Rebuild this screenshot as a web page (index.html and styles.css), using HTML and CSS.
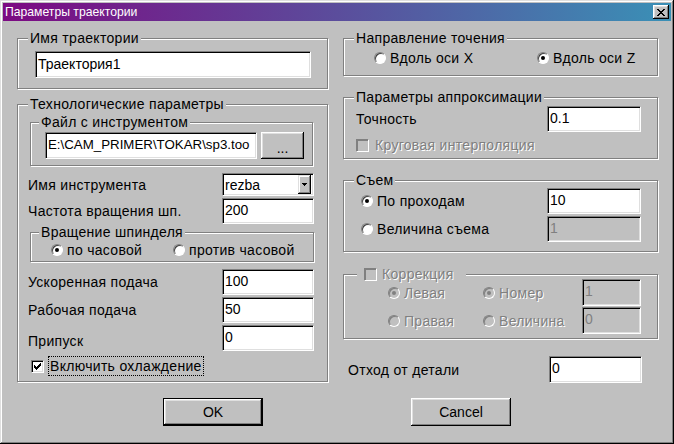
FILE: index.html
```html
<!DOCTYPE html>
<html lang="ru">

<head>
  <meta charset="UTF-8">
  <title>Параметры траектории</title>
  <link rel="stylesheet" href="styles.css">
</head>

<body>
  <div class="window">
    <div class="titlebar">
      <span class="title">Параметры траектории</span>
      <span class="close-btn">
        <svg width="8" height="7" viewBox="0 0 8 7" shape-rendering="crispEdges">
          <path fill="#000" d="M0 0h2v1H0zM6 0h2v1H6zM1 1h2v1H1zM5 1h2v1H5zM2 2h4v1H2zM3 3h2v1H3zM2 4h4v1H2zM1 5h2v1H1zM5 5h2v1H5zM0 6h2v1H0zM6 6h2v1H6z" />
        </svg>
      </span>
    </div>

    <div class="columns">
      <!-- left side -->
      <div class="col col-left">
        <fieldset class="group group-name">
          <legend>Имя траектории</legend>
          <div class="group-body">
            <div class="edit name-edit">Траектория1</div>
          </div>
        </fieldset>

        <fieldset class="group group-tech">
          <legend>Технологические параметры</legend>
          <div class="group-body">

            <fieldset class="group group-file">
              <legend>Файл с инструментом</legend>
              <div class="group-body file-row">
                <div class="edit file-edit">E:\CAM_PRIMER\TOKAR\sp3.too</div>
                <div class="btn browse-btn">...</div>
              </div>
            </fieldset>

            <div class="row row-combo">
              <span class="label">Имя инструмента</span>
              <div class="combo">
                <span class="combo-text">rezba</span>
                <span class="combo-btn">
                  <svg width="5" height="3" viewBox="0 0 5 3" shape-rendering="crispEdges">
                    <path fill="#000" d="M0 0h5v1H0zM1 1h3v1H1zM2 2h1v1H2z" />
                  </svg>
                </span>
              </div>
            </div>
            <div class="row">
              <span class="label">Частота вращения шп.</span>
              <div class="edit num-edit">200</div>
            </div>

            <fieldset class="group group-spindle">
              <legend>Вращение шпинделя</legend>
              <div class="group-body radio-row">
                <span class="radio-item spindle-first"><span class="radio checked"></span>по часовой</span>
                <span class="radio-item"><span class="radio"></span>против часовой</span>
              </div>
            </fieldset>

            <div class="row row-after-group">
              <span class="label">Ускоренная подача</span>
              <div class="edit num-edit">100</div>
            </div>
            <div class="row">
              <span class="label">Рабочая подача</span>
              <div class="edit num-edit">50</div>
            </div>
            <div class="row">
              <span class="label label-low">Припуск</span>
              <div class="edit num-edit">0</div>
            </div>

            <div class="check-row">
              <span class="checkbox">
                <svg width="7" height="7" viewBox="0 0 7 7" shape-rendering="crispEdges">
                  <path fill="#000" d="M6 0h1v3H6zM5 1h1v3H5zM4 2h1v3H4zM3 3h1v3H3zM2 4h1v3H2zM1 3h1v3H1zM0 2h1v3H0z" />
                </svg>
              </span>
              <span class="focus-label">Включить охлаждение</span>
            </div>
          </div>
        </fieldset>
      </div>

      <!-- right side -->
      <div class="col col-right">
        <fieldset class="group group-dir">
          <legend>Направление точения</legend>
          <div class="group-body radio-row">
            <span class="radio-item dir-first"><span class="radio"></span>Вдоль оси X</span>
            <span class="radio-item"><span class="radio checked"></span>Вдоль оси Z</span>
          </div>
        </fieldset>

        <fieldset class="group group-approx">
          <legend>Параметры аппроксимации</legend>
          <div class="group-body">
            <div class="row">
              <span class="label">Точность</span>
              <div class="edit approx-edit">0.1</div>
            </div>
            <div class="check-row check-disabled">
              <span class="checkbox disabled"></span>
              <span class="disabled-text">Круговая интерполяция</span>
            </div>
          </div>
        </fieldset>

        <fieldset class="group group-cut">
          <legend>Съем</legend>
          <div class="group-body">
            <div class="row">
              <span class="radio-item"><span class="radio checked"></span>По проходам</span>
              <div class="edit approx-edit">10</div>
            </div>
            <div class="row">
              <span class="radio-item"><span class="radio"></span>Величина съема</span>
              <div class="edit approx-edit disabled">1</div>
            </div>
          </div>
        </fieldset>

        <fieldset class="group group-corr">
          <legend class="corr-legend">
            <span class="checkbox disabled"></span>
            <span class="disabled-text">Коррекция</span>
          </legend>
          <div class="group-body corr-grid">
            <span class="radio-item disabled-text"><span class="radio disabled checked"></span>Левая</span>
            <span class="radio-item disabled-text"><span class="radio disabled checked"></span>Номер</span>
            <div class="edit corr-edit disabled">1</div>
            <span class="radio-item disabled-text"><span class="radio disabled"></span>Правая</span>
            <span class="radio-item disabled-text"><span class="radio disabled"></span>Величина</span>
            <div class="edit corr-edit disabled">0</div>
          </div>
        </fieldset>

        <div class="row row-offset">
          <span class="label">Отход от детали</span>
          <div class="edit offset-edit">0</div>
        </div>
      </div>
    </div>

    <div class="footer">
      <div class="btn btn-default">OK</div>
      <div class="btn">Cancel</div>
    </div>
  </div>
</body>

</html>
```

FILE: styles.css
```css
* {
  margin: 0;
  padding: 0;
  box-sizing: border-box;
}

body {
  background: #c0c0c0;
  font-family: "Liberation Sans", Arial, sans-serif;
  font-size: 14px;
  letter-spacing: 0.3px;
  color: #000;
}

.window {
  width: 674px;
  height: 444px;
  padding: 3px;
  background: #c0c0c0;
  box-shadow: inset -1px -1px #000, inset 1px 1px #dfdfdf, inset -2px -2px #808080, inset 2px 2px #fff;
}

/* title bar */

.titlebar {
  height: 18px;
  display: flex;
  align-items: center;
  justify-content: space-between;
  padding: 0 2px;
  background: linear-gradient(to right, #7c0a82, #3a90b6);
  color: #fff;
}

.title {
  font-size: 12.2px;
  letter-spacing: 0;
  line-height: 16px;
}

.close-btn {
  width: 16px;
  height: 14px;
  display: flex;
  align-items: center;
  justify-content: center;
  background: #c0c0c0;
  box-shadow: inset -1px -1px #000, inset 1px 1px #fff, inset -2px -2px #808080, inset 2px 2px #dfdfdf;
}

/* columns */

.columns {
  display: flex;
  gap: 15px;
  padding: 10px 0 0 14px;
}

.col-left {
  width: 311px;
}

.col-right {
  width: 315px;
}

/* group boxes */

.group {
  border: 1px solid #808080;
  box-shadow: inset 1px 1px #fff, 1px 1px #fff;
  min-width: 0;
}

.group > legend {
  margin-left: 10px;
  padding: 0 2px;
  line-height: 14px;
  background: #c0c0c0;
}

.group-name > .group-body {
  padding: 6px 16px 10px 17px;
}

.group-tech {
  margin-top: 8px;
}

.group-tech > .group-body {
  padding: 4px 13px 5px 10px;
}

.group-file {
  margin: 0 1px 0 2px;
}

.group-file > .group-body {
  padding: 3px 8px 6px 14px;
}

.group-file > legend,
.group-spindle > legend {
  margin-left: 8px;
}

.group-spindle {
  width: 284px;
  margin: 1px 0 0 2px;
}

.group-spindle > .group-body {
  padding: 4px 0 4px 20px;
  height: 22px;
}

.group-dir > .group-body {
  padding: 6px 0 10px 30px;
  height: 30px;
}

.group-approx {
  margin-top: 14px;
}

.group-approx > .group-body {
  padding: 2px 16px 6px 12px;
}

.group-cut {
  margin-top: 14px;
}

.group-cut > .group-body {
  padding: 1px 16px 9px 17px;
}

.group-corr {
  margin-top: 15px;
}

.group > .corr-legend {
  margin-left: 13px;
  padding: 0 12px 0 7px;
  display: flex;
  align-items: center;
  gap: 5px;
}

/* controls */

.edit {
  height: 26px;
  padding: 3px 0 0 2px;
  line-height: 16px;
  letter-spacing: 0;
  background: #fff;
  border: 1px solid;
  border-color: #808080 #fff #fff #808080;
  box-shadow: inset 1px 1px #000, inset -1px -1px #dfdfdf;
  white-space: nowrap;
  overflow: hidden;
}

.edit.disabled {
  background: #c0c0c0;
  color: #808080;
}

.name-edit {
  width: 276px;
  height: 27px;
  padding-top: 4px;
}

.file-row {
  display: flex;
  gap: 4px;
}

.file-edit {
  width: 212px;
  height: 27px;
  padding-top: 4px;
  font-size: 13.3px;
}

.num-edit {
  width: 92px;
}

.approx-edit {
  width: 94px;
}

.corr-edit {
  width: 59px;
  height: 27px;
}

.offset-edit {
  width: 93px;
  height: 27px;
}

.btn {
  width: 100px;
  height: 28px;
  display: flex;
  align-items: center;
  justify-content: center;
  letter-spacing: 0;
  background: #c0c0c0;
  box-shadow: inset -1px -1px #000, inset 1px 1px #fff, inset -2px -2px #808080, inset 2px 2px #dfdfdf;
}

.btn-default {
  border: 1px solid #000;
}

.browse-btn {
  width: 43px;
  height: 27px;
  padding-top: 4px;
}

.combo {
  width: 92px;
  height: 23px;
  display: flex;
  align-items: center;
  justify-content: space-between;
  padding: 0 2px 0 2px;
  background: #fff;
  border: 1px solid;
  border-color: #808080 #fff #fff #808080;
  box-shadow: inset 1px 1px #000, inset -1px -1px #dfdfdf;
  letter-spacing: 0;
}

.combo-btn {
  width: 13px;
  height: 19px;
  display: flex;
  align-items: center;
  justify-content: center;
  background: #c0c0c0;
  box-shadow: inset -1px -1px #000, inset 1px 1px #dfdfdf, inset -2px -2px #808080, inset 2px 2px #fff;
}

.radio {
  display: inline-block;
  position: relative;
  flex-shrink: 0;
  width: 12px;
  height: 12px;
  margin-right: 4px;
  border-radius: 50%;
  background: #fff;
  border: 1px solid;
  border-color: #808080 #fff #fff #808080;
  box-shadow: inset 1px 1px #404040;
}

.radio.checked::after {
  content: "";
  position: absolute;
  left: 3px;
  top: 3px;
  width: 4px;
  height: 4px;
  border-radius: 50%;
  background: #000;
}

.radio.disabled {
  background: #c0c0c0;
  box-shadow: inset 1px 1px #808080;
}

.radio.disabled.checked::after {
  background: #808080;
}

.radio-item {
  display: flex;
  align-items: center;
}

.radio-row {
  display: flex;
  align-items: center;
}

.spindle-first {
  width: 122px;
}

.dir-first {
  width: 163px;
}

.checkbox {
  width: 13px;
  height: 13px;
  display: flex;
  align-items: center;
  justify-content: center;
  flex-shrink: 0;
  background: #fff;
  border: 1px solid;
  border-color: #808080 #fff #fff #808080;
  box-shadow: inset 1px 1px #000, inset -1px -1px #dfdfdf;
}

.checkbox.disabled {
  background: #c0c0c0;
  box-shadow: inset 1px 1px #808080;
}

.disabled-text {
  color: #808080;
  text-shadow: 1px 1px #fff;
}

.check-row {
  display: flex;
  align-items: center;
  height: 20px;
  margin-top: 5px;
  padding-left: 3px;
  gap: 4px;
}

.focus-label {
  height: 20px;
  line-height: 18px;
  padding: 0 1px;
  border: 1px dotted #000;
}

.check-disabled {
  height: 14px;
  margin-top: 6px;
  padding-left: 0;
  gap: 6px;
}

/* rows with label and field */

.row {
  display: flex;
  align-items: center;
  justify-content: space-between;
  margin-top: 2px;
}

.group-body > .row:first-child {
  margin-top: 0;
}

.row-combo {
  margin-top: 7px;
}

.row-after-group {
  margin-top: 7px;
}

.label-low {
  padding-top: 5px;
}

.corr-grid {
  display: grid;
  grid-template-columns: 95px 99px 59px;
  grid-auto-rows: 27px;
  row-gap: 1px;
  align-items: center;
  margin-top: -2px;
  padding: 0 16px 4px 44px;
}

.row-offset {
  margin-top: 17px;
  padding-left: 5px;
  margin-right: 16px;
}

/* buttons at the bottom */

.footer {
  display: flex;
  gap: 148px;
  margin-top: 15px;
  padding-left: 160px;
}
```
